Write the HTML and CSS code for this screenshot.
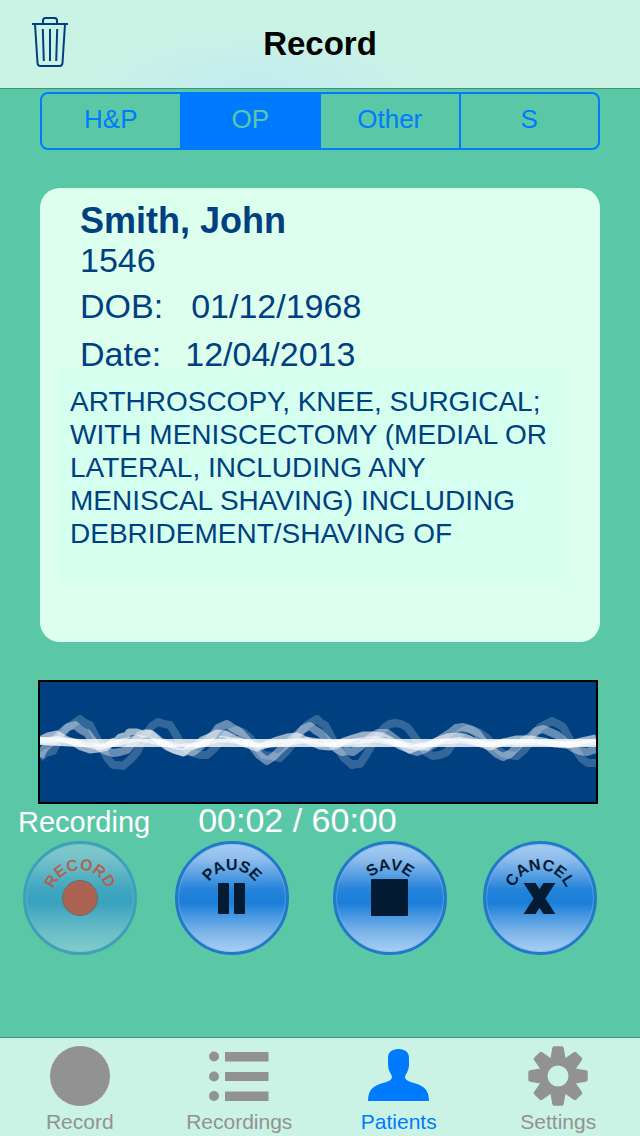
FILE: index.html
```html
<!DOCTYPE html>
<html lang="en">
	<head>
		<meta charset="UTF-8" />
		<title>Record</title>
		<meta name="viewport" content="width=device-width,initial-scale=1" />
		<link rel="stylesheet" href="styles.css">
	</head>
	<body>
		<header class="navbar">
			<button type="button" class="trash" aria-label="Delete">
				<svg width="36" height="50" viewBox="0 0 36 50" fill="none" stroke="#004080" stroke-width="2">
					<path d="M0 7H36M11 7V3.500Q11 1 13.500 1H22.500Q25 1 25 3.500V7" />
					<path d="M3 7L5.500 46Q5.700 49 8.500 49H27.500Q30.300 49 30.500 46L33 7M10.800 12L11.800 44M18 12V44M25.200 12L24.200 44" />
				</svg>
			</button>
			<h1>Record</h1>
		</header>
		<main>
			<div class="segments" role="group" aria-label="Note type">
				<button type="button">H&amp;P</button>
				<button type="button" class="selected" aria-pressed="true">OP</button>
				<button type="button">Other</button>
				<button type="button">S</button>
			</div>
			<section class="card">
				<h2>Smith, John</h2>
				<p class="number">1546</p>
				<p class="dates dob"><span>DOB:</span><span>01/12/1968</span></p>
				<p class="dates"><span>Date:</span><span>12/04/2013</span></p>
				<p class="procedure">ARTHROSCOPY, KNEE, SURGICAL; WITH MENISCECTOMY (MEDIAL OR LATERAL, INCLUDING ANY MENISCAL SHAVING) INCLUDING DEBRIDEMENT/SHAVING OF</p>
			</section>
			<div class="wave">
				<svg viewBox="0 0 556 120" preserveAspectRatio="none" fill="none" stroke="#fff" stroke-linejoin="round">
					<polyline stroke-opacity=".2" stroke-width="8" points="0,76 6,71 13,69 19,58 27,46 33,42 40,37 45,41 50,43 56,55 63,68 68,77 73,83 78,83 83,84 90,78 97,70 102,60 107,51 112,44 118,40 124,42 130,43 135,51 140,60 147,68 153,71 160,73 167,73 174,67 180,60 188,51 197,48 204,51 210,56 217,65 223,73 232,74 240,76 246,70 253,61 260,51 267,43 272,40 277,37 281,41 285,43 291,54 297,66 304,76 312,83 316,82 320,82 326,73 333,61 339,52 345,45 350,42 355,41 361,42 367,45 374,54 380,63 386,70 393,74 400,73 407,70 413,61 420,51 427,47 433,48 440,51 447,56 454,64 462,71 469,73 477,74 484,68 490,60 495,52 500,45 506,42 512,39 518,42 523,45 530,58 537,70 542,77 548,81 556,81" />
					<polyline stroke-opacity=".4" stroke-width="8" points="0,75 4,67 10,61 15,58 22,50 28,45 35,43 41,48 47,51 53,59 60,66 66,69 73,71 80,70 87,68 93,61 100,53 106,51 113,53 120,59 127,63 135,68 143,70 148,69 153,70 160,65 167,58 173,53 178,46 187,42 193,46 200,50 207,58 213,65 219,73 227,79 233,75 240,68 248,61 257,53 263,47 270,44 275,48 280,51 287,58 295,66 302,70 307,69 313,70 321,64 330,56 338,51 347,51 355,57 363,63 370,68 377,70 385,67 393,63 402,56 410,51 416,46 423,45 430,47 437,51 443,59 450,66 457,72 463,75 470,72 477,65 483,59 490,55 496,49 503,47 510,50 517,53 525,60 533,66 540,69 547,70 556,67" />
					<polyline stroke-opacity=".6" stroke-width="7" points="0,58 8,54 17,52 25,57 33,60 41,65 50,68 58,67 67,65 72,60 76,59 80,55 87,53 89,50 97,50 103,52 110,51 118,58 127,65 134,68 143,71 149,66 157,63 162,58 169,55 177,51 185,52 193,56 205,62 217,66 227,62 237,58 247,55 257,54 268,59 280,64 289,65 297,63 304,59 313,56 323,53 333,53 342,54 350,58 360,64 370,68 378,65 387,65 396,59 407,55 417,54 427,56 438,61 450,65 463,60 477,57 490,57 503,59 515,62 527,63 542,59 556,56" />
					<polyline stroke-opacity=".6" stroke-width="6" points="0,59 17,57 36,60 58,65 77,61 98,56 118,60 140,65 160,63 180,57 200,59 220,64 244,61 268,58 290,61 310,60 335,57 355,61 376,65 398,60 420,58 445,62 475,60 505,61 530,63 556,60" />
					<path stroke-opacity=".8" stroke-width="8" d="M0 59L40 61H556" />
				</svg>
			</div>
			<div class="status">
				<span class="state">Recording</span>
				<span class="timer">00:02 / 60:00</span>
			</div>
			<div class="controls">
				<button type="button" class="round" disabled="disabled">
					<svg width="114" height="114" viewBox="0 0 114 114">
						<defs>
							<linearGradient id="gloss" x1="0" y1="0" x2="0" y2="1">
								<stop offset="0" stop-color="#a8cff4" />
								<stop offset=".15" stop-color="#8fbdec" />
								<stop offset=".42" stop-color="#2684db" />
								<stop offset=".54" stop-color="#1a7ed9" />
								<stop offset=".8" stop-color="#7ab3e9" />
								<stop offset="1" stop-color="#acd1f5" />
							</linearGradient>
							<path id="arc" d="M29 57A28 28 0 0 1 85 57" />
							<g id="disc">
								<circle cx="57" cy="57" r="55.500" fill="url(#gloss)" stroke="#2279c8" stroke-width="3" />
								<circle cx="57" cy="57" r="53.500" fill="none" stroke="#7db5ea" stroke-opacity=".5" />
							</g>
						</defs>
						<use href="#disc" />
						<g fill="#ff0000">
							<text class="arc-text"><textPath href="#arc" startOffset="50%">RECORD</textPath></text>
							<circle cx="57" cy="57" r="17.500" stroke="#701818" />
						</g>
					</svg>
				</button>
				<button type="button" class="round">
					<svg width="114" height="114" viewBox="0 0 114 114" fill="#041c33">
						<use href="#disc" />
						<text class="arc-text"><textPath href="#arc" startOffset="50%">PAUSE</textPath></text>
						<rect x="43" y="42" width="11" height="31" rx="1" />
						<rect x="59" y="42" width="11" height="31" rx="1" />
					</svg>
				</button>
				<button type="button" class="round">
					<svg width="114" height="114" viewBox="0 0 114 114" fill="#041c33">
						<use href="#disc" />
						<text class="arc-text"><textPath href="#arc" startOffset="50%">SAVE</textPath></text>
						<rect x="38" y="38" width="37" height="37" rx="1" />
					</svg>
				</button>
				<button type="button" class="round">
					<svg width="114" height="114" viewBox="0 0 114 114" fill="#041c33">
						<use href="#disc" />
						<text class="arc-text"><textPath href="#arc" startOffset="50%">CANCEL</textPath></text>
						<svg x="40" y="42" width="33" height="31" viewBox="0 0 33 31">
							<path stroke="#041c33" stroke-width="10" d="M4 -4L29 35M29 -4L4 35" />
						</svg>
					</svg>
				</button>
			</div>
		</main>
		<nav class="tabbar">
			<a href="#record">
				<svg width="60" height="60" viewBox="0 0 60 60"><circle cx="30" cy="30" r="30" /></svg>
				<span>Record</span>
			</a>
			<a href="#recordings">
				<svg width="60" height="60" viewBox="0 0 60 60">
					<circle cx="5" cy="10.500" r="5" /><circle cx="5" cy="30.500" r="5" /><circle cx="5" cy="50" r="5" />
					<path d="M16 6H59.500V15.500H16ZM16 26H59.500V35H16ZM16 45.500H59.500V55H16Z" />
				</svg>
				<span>Recordings</span>
			</a>
			<a href="#patients" class="current" aria-current="page">
				<svg width="61" height="60" viewBox="0 0 61 60">
					<path d="M30.500 3C37.500 3 41 6.500 41 12V18C41 26 37 28 37 31.500C38 34.500 41 35.500 46 37C55 39.500 61 43 61 55H0C0 43 6 39.500 15 37C20 35.500 23 34.500 24 31.500C24 28 20 26 20 18V12C20 6.500 23.500 3 30.500 3Z" />
				</svg>
				<span>Patients</span>
			</a>
			<a href="#settings">
				<svg width="60" height="60" viewBox="0 0 60 60">
					<defs><path id="tooth" d="M22 15L24.300 2Q24.600 .3 26 .3H34Q35.400 .3 35.700 2L38 15Z" /></defs>
					<use href="#tooth" />
					<use href="#tooth" transform="rotate(45 30 30)" />
					<use href="#tooth" transform="rotate(90 30 30)" />
					<use href="#tooth" transform="rotate(135 30 30)" />
					<use href="#tooth" transform="rotate(180 30 30)" />
					<use href="#tooth" transform="rotate(225 30 30)" />
					<use href="#tooth" transform="rotate(270 30 30)" />
					<use href="#tooth" transform="rotate(315 30 30)" />
					<circle cx="30" cy="30" r="14.500" fill="none" stroke="#929292" stroke-width="8" />
				</svg>
				<span>Settings</span>
			</a>
		</nav>
	</body>
</html>
```
FILE: styles.css
```css
*{
	box-sizing:border-box;
}
body{
	display:flex;
	flex-direction:column;
	min-height:100vh;
	margin:0;
	background-color:#5ac8a6;
	color:#004080;
	font-family:"Liberation Sans",Arial,sans-serif;
}
h1,h2,p{
	margin:0;
}
button{
	padding:0;
	border:0;
	background:none;
	color:inherit;
	font-family:inherit;
}
svg{
	display:block;
}
main{
	flex:1;
}
.navbar{
	display:grid;
	grid-template-columns:1fr auto 1fr;
	align-items:center;
	height:89px;
	padding:0 32px;
	border-bottom:1px solid #429072;
	background:radial-gradient(ellipse 180px 60px at 40% 100%,#c2ebf2,#caf3e5);
}
.navbar h1{
	color:#000;
	font-size:33px;
	line-height:40px;
}
.trash{
	justify-self:start;
	padding-bottom:4px;
}
.segments{
	display:flex;
	height:58px;
	margin:3px 40px 38px;
	overflow:hidden;
	border:2px solid #007aff;
	border-radius:8px;
}
.segments button{
	flex:1;
	padding-bottom:3px;
	color:#007aff;
	font-size:26px;
}
.segments button:not(:last-child){
	border-right:2px solid #007aff;
}
.segments .selected{
	background-color:#007aff;
	color:#5ac8a6;
}
.card{
	margin:0 40px;
	padding:13px 32px 58px 20px;
	border-radius:20px;
	background-color:#ddffee;
}
.card h2,.number,.dates{
	padding-left:20px;
}
.card h2{
	font-size:36px;
	line-height:40px;
}
.number,.dates{
	font-size:34px;
	line-height:38px;
}
.dates{
	display:flex;
	gap:24px;
	padding-top:10px;
}
.dob{
	gap:28px;
	padding-top:8px;
}
.procedure{
	min-height:216px;
	margin-top:-5px;
	padding:17px 10px;
	background-color:#d5ffef;
	font-size:28px;
	line-height:33px;
}
.wave{
	margin:38px 42px 0 38px;
	border:2px solid #000;
	background-color:#004080;
}
.wave svg{
	width:100%;
	height:120px;
}
.status{
	display:flex;
	align-items:baseline;
	gap:48px;
	padding-left:18px;
	color:#fff;
	line-height:32px;
}
.state{
	font-size:29px;
}
.timer{
	font-size:34px;
}
.controls{
	display:grid;
	grid-template-columns:152fr 158fr 150fr 114fr;
	padding:3px 43px 24px 23px;
}
.round{
	justify-self:start;
	border-radius:50%;
}
.round:disabled{
	opacity:.5;
}
.arc-text{
	font-size:16px;
	font-weight:bold;
	text-anchor:middle;
}
.tabbar{
	display:flex;
	height:99px;
	padding:8px 2px 0 0;
	border-top:1px solid #429072;
	background-color:#caf3e5;
}
.tabbar a{
	display:flex;
	flex:1;
	flex-direction:column;
	align-items:center;
	gap:4px;
	color:#929292;
	font-size:21px;
	line-height:24px;
	text-decoration:none;
	fill:#929292;
}
.tabbar .current{
	color:#007aff;
	fill:#007aff;
}
```
